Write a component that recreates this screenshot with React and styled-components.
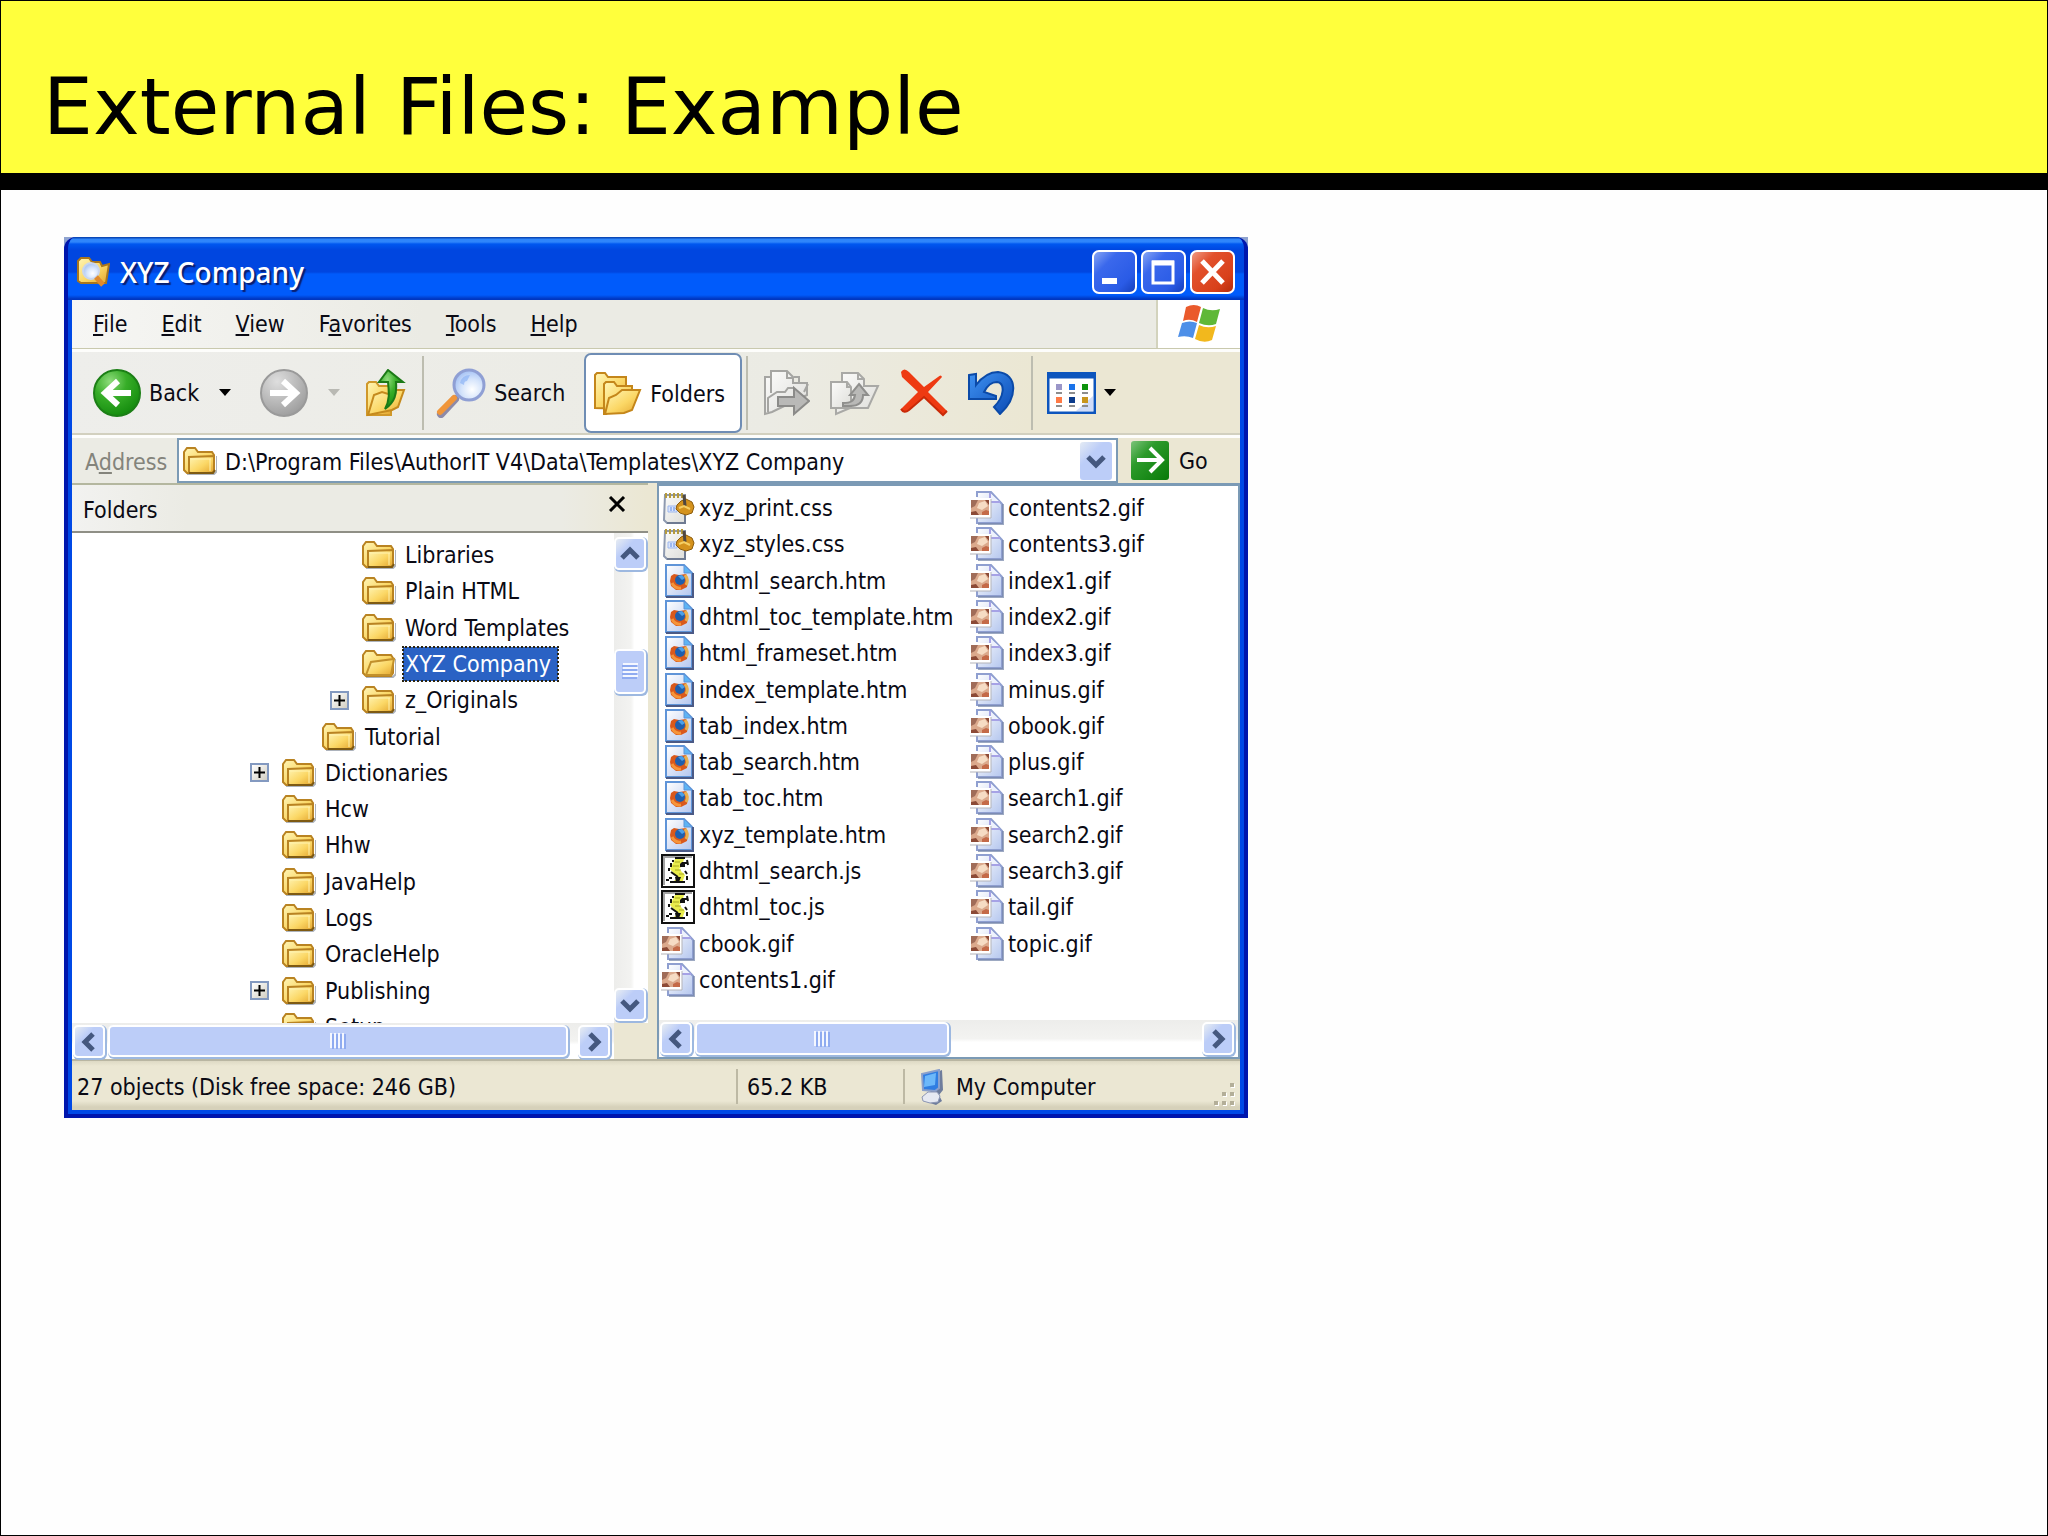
import React from 'react';

import styled, { createGlobalStyle } from 'styled-components';

const GlobalStyle = createGlobalStyle`
  :root {
    --ui: 'DejaVu Sans Condensed', 'DejaVu Sans', sans-serif;
    --face: #ebebe4;
    --sand: #ebe7d3;
    --line: #7b9ab5;
    --thumb: #bccdf8;
  }

  *, *::before, *::after {
    box-sizing: border-box;
  }

  body {
    margin: 0;
    background: #fefefe;
    color: #0a0a14;
    font-family: var(--ui);
    font-size: 23px;
    line-height: 28px;
  }

  button, select {
    color: inherit;
    font: inherit;
  }

  svg {
    display: block;
    flex: none;
  }
`;

/* slide */

const Slide = styled.main`
  min-height: 100vh;
  border: 1px solid #000;
`;

const Banner = styled.header`
  height: 189px;
  padding: 58px 42px 0;
  background: #ffff3c;
  border-bottom: 17px solid #000;
`;

const Title = styled.h1`
  margin: 0;
  color: #000;
  font-family: 'DejaVu Sans', sans-serif;
  font-size: 79px;
  font-weight: 400;
  line-height: 96px;
`;

const Stage = styled.section`
  padding: 47px 63px;
`;

/* window frame */

const Corners = styled.div`
  width: 100%;
  max-width: 1184px;
  background: linear-gradient(#8fa3d0 0 20px, transparent 20px);
`;

const Frame = styled.article`
  border: solid #0016ad;
  border-width: 0 4px 4px;
  border-radius: 12px 12px 0 0;
  padding: 0 4px 4px;
  background: #0049e6;
  overflow: hidden;
`;

const TitleBar = styled.header`
  display: flex;
  align-items: center;
  gap: 10px;
  height: 63px;
  margin: 0 -4px;
  padding: 6px 9px 0 8px;
  background: linear-gradient(
    #0a48b8 0 1px,
    #2f86fb 2px 5px,
    #0058f0 7px,
    #0046e0 13px 35px,
    #005bfb 37px 58px,
    #0036c0 62px
  );
`;

const WindowName = styled.h2`
  flex: 1;
  margin: 0;
  color: #fff;
  font-family: 'Noto Sans', sans-serif;
  font-size: 28px;
  font-weight: 500;
  line-height: 36px;
  text-shadow: 2px 2px 1px #0a1e6e;
`;

const Controls = styled.div`
  display: flex;
  gap: 4px;
`;

const ControlButton = styled.button`
  width: 45px;
  height: 44px;
  padding: 0;
  border: 2px solid #fff;
  border-radius: 7px;
  background: ${({ $close }) =>
    $close
      ? 'linear-gradient(135deg, #ef9a83, #e2512c 30%, #d8401a 75%, #b42c0c)'
      : 'linear-gradient(135deg, #86a5f5, #3a68ec 30%, #2a5be6 75%, #1640bc)'};
`;

/* bars */

const MenuBar = styled.nav`
  display: flex;
  align-items: center;
  height: 49px;
  padding-left: 21px;
  background: linear-gradient(90deg, #f6f6f4, var(--face) 30%);
  border-bottom: 1px solid #c9c9ae;
`;

const MenuItems = styled.div`
  display: flex;
  flex: 1;
  gap: 34px;
`;

const MenuButton = styled.button`
  padding: 0;
  border: 0;
  background: none;
`;

const Brand = styled.div`
  display: flex;
  align-items: center;
  justify-content: center;
  width: 84px;
  height: 48px;
  background: #fff;
  border-left: 2px solid #d3d3bd;
`;

const Toolbar = styled.div`
  display: flex;
  align-items: center;
  height: 86px;
  padding-left: 21px;
  background: linear-gradient(100deg, #eeeeeb, var(--face) 60%, var(--sand) 82%);
  border-top: 3px solid #fdfdfb;
  border-bottom: 2px solid #d2d0bf;
`;

const ToolButton = styled.button`
  display: flex;
  align-items: center;
  gap: 8px;
  height: 80px;
  padding: 0;
  border: 0;
  background: none;
  margin-right: ${({ $after = 20 }) => $after}px;

  &[aria-pressed='true'] {
    width: 158px;
    padding: 2px 8px 0;
    background: #fff;
    border: 2px solid #6f8db4;
    border-radius: 7px;
  }
`;

const Separator = styled.span`
  flex: none;
  width: 2px;
  height: 74px;
  margin-right: ${({ $after = 14 }) => $after}px;
  background: #bdbdb0;
`;

const AddressBar = styled.div`
  display: flex;
  align-items: stretch;
  height: 48px;
  padding-left: 13px;
  background: linear-gradient(90deg, var(--face) 60%, var(--sand) 90%);
  border-top: 3px solid #fdfdfb;
`;

const AddressLabel = styled.label`
  width: 92px;
  padding-top: 10px;
  color: #84847c;
`;

const AddressBox = styled.div`
  display: flex;
  flex: 1;
  align-items: center;
  gap: 8px;
  padding: 0 4px;
  background: #fff;
  border: 2px solid var(--line);
`;

const AddressSelect = styled.select`
  flex: 1;
  min-width: 0;
  padding: 2px 0 0;
  appearance: none;
  background: none;
  border: 0;
`;

const DropMark = styled.span`
  display: flex;
  align-items: center;
  justify-content: center;
  width: 32px;
  height: 38px;
  background: linear-gradient(135deg, #e4ebf4, var(--thumb) 35%);
  border-radius: 3px;
`;

const GoButton = styled.button`
  display: flex;
  align-items: center;
  gap: 10px;
  width: 122px;
  padding: 0 0 0 13px;
  border: 0;
  background: none;
`;

/* panes */

const Panes = styled.div`
  display: flex;
  height: 578px;
  background: var(--sand);
  border-bottom: 2px solid #b9b6a2;
`;

const FolderPane = styled.section`
  display: grid;
  grid-template: 50px 1fr 36px / 1fr 34px;
  width: 576px;
  margin-right: 9px;
`;

const PaneHeader = styled.header`
  display: flex;
  grid-column: 1 / -1;
  align-items: flex-start;
  justify-content: space-between;
  padding: 11px 22px 0 11px;
  background: linear-gradient(90deg, #f2f2f0, var(--face) 20% 85%, var(--sand));
  border-top: 2px solid #b4b79f;
  border-bottom: 2px solid #8f8f86;
`;

const CloseButton = styled.button`
  padding: 0;
  border: 0;
  background: none;
`;

const TreeClip = styled.div`
  min-height: 0;
  overflow: hidden;
  padding-top: 4px;
  background: #fff;
`;

const Tree = styled.ul`
  display: grid;
  grid-template-rows: repeat(14, 1fr);
  height: 508px;
  margin: 0;
  padding: 0;
  list-style: none;
`;

const TreeRow = styled.li`
  display: flex;
  align-items: center;
  padding-left: ${({ $level }) => 178 + $level * 40}px;
`;

const ExpanderSlot = styled.span`
  display: flex;
  width: 32px;
`;

const Expander = styled.button`
  display: flex;
  align-items: center;
  justify-content: center;
  width: 19px;
  height: 19px;
  padding: 0;
  background: linear-gradient(135deg, #fff, #d3cfc3);
  border: 2px solid #8399c0;
`;

const TreeLabel = styled.span`
  margin-left: 7px;
  padding: 3px ${({ $selected }) => ($selected ? 7 : 2)}px 3px 2px;
  color: ${({ $selected }) => ($selected ? '#fff' : 'inherit')};
  background: ${({ $selected }) => ($selected ? '#2a62c4' : 'none')};
  outline: ${({ $selected }) => ($selected ? '2px dotted #2b2410' : 'none')};
  outline-offset: -1px;
`;

const FilePane = styled.section`
  display: flex;
  flex: 1;
  flex-direction: column;
  min-width: 0;
  background: #fff;
  border: 2px solid var(--line);
  border-top-width: 3px;
`;

const FileList = styled.ul`
  display: grid;
  grid-auto-flow: column;
  grid-template-rows: repeat(14, 1fr);
  grid-template-columns: 309px 1fr;
  height: 508px;
  margin: 4px 0 0 2px;
  padding: 0;
  list-style: none;
`;

const FileRow = styled.li`
  display: flex;
  align-items: center;
  gap: 4px;
`;

/* scroll bars */

const ScrollBar = styled.div`
  display: flex;
  flex-direction: ${({ $vertical }) => ($vertical ? 'column' : 'row')};
  gap: 3px;
  padding: ${({ $vertical }) => ($vertical ? '4px 2px 2px 0' : '2px 4px 2px 1px')};
  margin-top: ${({ $bottom }) => ($bottom ? 'auto' : 0)};
  background: linear-gradient(${({ $vertical }) => ($vertical ? '90deg' : '180deg')}, #ededeb, #f3f3f1 50%, #fff 60%);
`;

const Cap = styled.button`
  display: flex;
  flex: none;
  align-items: center;
  justify-content: center;
  width: 32px;
  height: 33px;
  padding: 0;
  background: linear-gradient(135deg, #e8edf2, var(--thumb) 35%);
  border: 2px solid #fff;
  border-radius: 5px;
  box-shadow: 1px 1px 0 1px #9db8e0;
`;

const Thumb = styled.div`
  display: flex;
  flex: ${({ $size }) => `${$size} 0 0`};
  align-items: center;
  justify-content: center;
  background: var(--thumb);
  border: 2px solid #fff;
  border-radius: 5px;
  box-shadow: 1px 1px 0 1px #9db8e0;
`;

const Track = styled.span`
  flex: ${({ $size }) => `${$size} 0 0`};
`;

/* status bar */

const StatusBar = styled.footer`
  display: flex;
  align-items: center;
  height: 49px;
  padding: 2px 4px 0 0;
  background: linear-gradient(#ddd9c4, var(--sand) 5px 40px, #d6d1ba 46px);
`;

const StatusCell = styled.div`
  display: flex;
  align-items: center;
  gap: 11px;
  width: ${({ $width }) => ($width ? `${$width}px` : 'auto')};
  flex: ${({ $width }) => ($width ? 'none' : 1)};
  height: 35px;
  padding-left: ${({ $pad = 9 }) => $pad}px;
  border-left: ${({ $first }) => ($first ? '0' : '2px solid #bdb9a4')};
`;

const ResizeCorner = styled.div`
  align-self: flex-end;
  padding-bottom: 3px;
`;

/* drawings */

const HiddenSvg = styled.svg`
  position: absolute;
`;

const Defs = () => (
  <HiddenSvg width="0" height="0" aria-hidden="true">
    <defs>
      <linearGradient id="gold" x1="0" y1="0" x2="1" y2="1">
        <stop offset="0" stopColor="#fff6b8" />
        <stop offset=".55" stopColor="#fbd765" />
        <stop offset="1" stopColor="#e3a52e" />
      </linearGradient>
      <radialGradient id="green" cx=".35" cy=".25" r=".8">
        <stop offset="0" stopColor="#8fdc7c" />
        <stop offset=".45" stopColor="#37ad28" />
        <stop offset="1" stopColor="#128a0c" />
      </radialGradient>
      <radialGradient id="grey" cx=".35" cy=".25" r=".8">
        <stop offset="0" stopColor="#dedede" />
        <stop offset=".5" stopColor="#bdbdbd" />
        <stop offset="1" stopColor="#9c9c9c" />
      </radialGradient>
      <linearGradient id="go" x1="0" y1="0" x2="1" y2="1">
        <stop offset="0" stopColor="#7cc47a" />
        <stop offset=".35" stopColor="#2c9a2a" />
        <stop offset="1" stopColor="#087a08" />
      </linearGradient>
      <radialGradient id="glass" cx=".6" cy=".65" r=".7">
        <stop offset="0" stopColor="#fff" />
        <stop offset=".5" stopColor="#d5e4fb" />
        <stop offset="1" stopColor="#9dbcf3" />
      </radialGradient>
      <linearGradient id="page" x1="0" y1="0" x2="1" y2="1">
        <stop offset="0" stopColor="#fff" />
        <stop offset="1" stopColor="#b4c6ee" />
      </linearGradient>
      <linearGradient id="silver" x1="0" y1="0" x2="1" y2="1">
        <stop offset="0" stopColor="#fbfbfa" />
        <stop offset="1" stopColor="#dededa" />
      </linearGradient>
      <linearGradient id="blue" x1="0" y1="0" x2="1" y2="1">
        <stop offset="0" stopColor="#3f92f2" />
        <stop offset="1" stopColor="#0a4ab4" />
      </linearGradient>
    </defs>
  </HiddenSvg>
);

const FolderIcon = ({ open }) => (
  <svg width="34" height="28" viewBox="0 0 34 28" aria-hidden="true">
    <path d="M4 27h27l3-3V9" fill="none" stroke="#8a93a0" strokeWidth="2" opacity=".7" />
    <path d="M1 23V5l3-4h8l3 4h14l2 3v15l-2 3H4z" fill="url(#gold)" stroke="#b98322" strokeWidth="2" />
    {open ? (
      <path d="M4 25L9 12l23-3-3 16z" fill="url(#gold)" stroke="#c2902b" strokeWidth="2" />
    ) : (
      <>
        <path d="M6 25V10l25-1v15l-2 2H7z" fill="url(#gold)" stroke="#b98322" strokeWidth="2" />
        <path d="M8 12h20M27 12v12" stroke="#fff3b0" strokeWidth="1" />
        <path d="M6 26h24l2-3" fill="none" stroke="#7e5a12" strokeWidth="2" />
      </>
    )}
  </svg>
);

const SearchFolderIcon = () => (
  <svg width="34" height="30" viewBox="0 0 34 30" aria-hidden="true">
    <path d="M2 24V4l3-3h8l3 4h8l2 4 7-2-3 19H5z" fill="url(#gold)" stroke="#a9761c" strokeWidth="2" />
    <circle cx="15" cy="14" r="8" fill="url(#glass)" stroke="#c9d6ee" strokeWidth="2" />
    <path d="M20 20l7 8" stroke="#e08a2c" strokeWidth="5" />
  </svg>
);

const RoundArrow = ({ flip, fill, edge }) => (
  <svg width="48" height="48" viewBox="0 0 48 48" aria-hidden="true">
    <circle cx="24" cy="24" r="23" fill={`url(#${fill})`} stroke={edge} strokeWidth="2" />
    <path
      d="M38 24H13M25 12L12 24l13 12"
      fill="none"
      stroke="#fff"
      strokeWidth="6"
      transform={flip ? 'rotate(180 24 24)' : undefined}
    />
  </svg>
);

const Caret = ({ color = '#000' }) => (
  <svg width="12" height="7" viewBox="0 0 12 7" aria-hidden="true">
    <path d="M0 0h12L6 7z" fill={color} />
  </svg>
);

const UpFolderIcon = () => (
  <svg width="40" height="48" viewBox="0 0 40 48" aria-hidden="true">
    <path d="M1 46V15l2-2h7l3 4h12v29z" fill="url(#gold)" stroke="#d0982a" strokeWidth="2" />
    <path d="M2 46l6-20 8-3 6 2 5-4h11l-6 17-6 3z" fill="url(#gold)" stroke="#c58a1d" strokeWidth="2" />
    <path
      d="M22 1l15 12h-7c1 12-1 20-11 27 5-9 4-17 3-27h-9z"
      fill="url(#green)"
      stroke="#1c7a17"
      strokeWidth="2"
    />
  </svg>
);

const SearchIcon = () => (
  <svg width="50" height="50" viewBox="0 0 50 50" aria-hidden="true">
    <path d="M5 46l14-15" stroke="#8d8aa8" strokeWidth="8" strokeLinecap="round" />
    <path d="M4 44l14-14" stroke="#f0963a" strokeWidth="6" strokeLinecap="round" />
    <circle cx="33" cy="17" r="15" fill="url(#glass)" stroke="#8f9fd4" strokeWidth="3" />
    <path d="M24 15q2-8 10-8l-3 6q-3 0-3 4z" fill="#8fb5f5" opacity=".7" />
  </svg>
);

const FoldersIcon = () => (
  <svg width="48" height="44" viewBox="0 0 48 44" aria-hidden="true">
    <path d="M1 36V3l2-2h8l3 4h18v32z" fill="url(#gold)" stroke="#c4861a" strokeWidth="2" />
    <path d="M10 42V12l2-2h8l3 4h15v6L12 42z" fill="url(#gold)" stroke="#c4861a" strokeWidth="2" />
    <path d="M11 42l4-16 7-3 6-5h18l-8 20-8 3z" fill="url(#gold)" stroke="#c4861a" strokeWidth="2" />
  </svg>
);

const MoveToIcon = () => (
  <svg width="46" height="46" viewBox="0 0 46 46" aria-hidden="true">
    <g fill="url(#silver)" stroke="#a5a5a2" strokeWidth="2">
      <path d="M1 44V7h6V1h16l6 6v6h14v12L8 42z" />
      <path d="M7 7v16M23 2v6h6M30 7h5v6M44 14l-4 8" fill="none" />
      <path d="M4 42V28l9-6h8l3-4h6" fill="none" />
      <path d="M14 27h16v-9l15 13-15 13v-8H14z" fill="#b9b9b7" stroke="#8b8b89" />
    </g>
  </svg>
);

const CopyToIcon = () => (
  <svg width="50" height="46" viewBox="0 0 50 46" aria-hidden="true">
    <g fill="url(#silver)" stroke="#a9a9a6" strokeWidth="2">
      <path d="M12 12V3h16l6 6v7h14L38 38H20L6 44v-6" />
      <path d="M1 38V12h16l4 5v21z" />
      <path d="M28 3v6h6M17 12v5h4" fill="none" />
      <path d="M29 14l9 11h-5c0 8-5 11-13 11h-7v-3c8 0 11-2 12-8h-5z" fill="#b9b9b7" stroke="#8f8f8d" />
    </g>
  </svg>
);

const DeleteIcon = () => (
  <svg width="48" height="48" viewBox="0 0 48 48" aria-hidden="true">
    <path d="M1 3q3-5 8 0l15 15L38 8q3-3 4 0L28 23l19 19-4 4-19-18L9 41q-5 4-8-1l17-17L2 8z" fill="#ee3a12" />
    <path d="M47 42l-4 4-19-18L9 41q-5 4-8-1" fill="none" stroke="#c92a08" strokeWidth="2" />
  </svg>
);

const UndoIcon = () => (
  <svg width="47" height="44" viewBox="0 0 47 44" aria-hidden="true">
    <path
      d="M1 4l7-1v11Q18 1 30 1c20 2 20 26 2 42l-6-7c11-11 11-24 3-25q-8 0-13 10l12 4v3H1z"
      fill="url(#blue)"
      stroke="#0b4aa8"
      strokeWidth="2"
    />
  </svg>
);

const ViewsIcon = () => (
  <svg width="49" height="42" viewBox="0 0 49 42" aria-hidden="true">
    <rect x="1" y="1" width="47" height="40" fill="#fff" stroke="#0d55bd" strokeWidth="3" />
    <path d="M1 4h47" stroke="#0d55bd" strokeWidth="5" />
    <path d="M29 39h17V24z" fill="#cfdcfa" />
    {[
      ['#9a96c8', '#ff7a45'],
      ['#1a73ea', '#0b3c8c'],
      ['#0d930d', '#c8961e'],
    ].map(([top, bottom], i) => (
      <g key={top} transform={`translate(${9 + i * 13} 0)`}>
        <path d="M0 12h6v6H0z" fill={top} />
        <path d="M0 25h6v6H0z" fill={bottom} />
        <path d="M0 21h6M0 34h6" stroke="#8d8d8d" strokeWidth="2" />
      </g>
    ))}
  </svg>
);

const FlagIcon = () => (
  <svg width="44" height="40" viewBox="0 0 44 40" aria-hidden="true">
    <path d="M9 3q8-4 15 0l-4 15q-7-4-14-1z" fill="#ea5a2c" />
    <path d="M26 4q8 4 17 1l-4 15q-8 3-17-1z" fill="#5fb837" />
    <path d="M5 19q8-3 15 0l-4 15q-7-3-15-1z" fill="#4d8fe8" />
    <path d="M22 21q8 4 17 1l-4 14q-8 4-17-1z" fill="#f2b81d" />
  </svg>
);

const GoIcon = () => (
  <svg width="38" height="39" viewBox="0 0 38 39" aria-hidden="true">
    <rect width="38" height="39" rx="3" fill="url(#go)" />
    <path d="M6 19h23M19 7l12 12-12 12" fill="none" stroke="#fff" strokeWidth="4" />
  </svg>
);

const rotations = { up: 0, right: 90, down: 180, left: 270 };

const Chevron = ({ to }) => (
  <svg width="20" height="20" viewBox="0 0 20 20" aria-hidden="true">
    <path
      d="M2 14l8-8 8 8"
      fill="none"
      stroke="#45587f"
      strokeWidth="5"
      transform={`rotate(${rotations[to]} 10 10)`}
    />
  </svg>
);

const Ridges = ({ vertical }) => (
  <svg width="16" height="16" viewBox="0 0 16 16" aria-hidden="true">
    <g transform={vertical ? 'rotate(90 8 8)' : undefined} strokeWidth="2">
      <path d="M1 0v15M5 0v15M9 0v15M13 0v15" stroke="#f4f7ff" />
      <path d="M3 1v15M7 1v15M11 1v15M15 1v15" stroke="#8fabf0" />
    </g>
  </svg>
);

const SmallCross = () => (
  <svg width="18" height="16" viewBox="0 0 18 16" aria-hidden="true">
    <path d="M2 1l14 14M16 1L2 15" stroke="#000" strokeWidth="3" />
  </svg>
);

const Plus = () => (
  <svg width="11" height="11" viewBox="0 0 11 11" aria-hidden="true">
    <path d="M0 5.500h11M5.500 0v11" stroke="#000" strokeWidth="2" />
  </svg>
);

const MinimizeGlyph = () => (
  <svg width="41" height="40" viewBox="0 0 41 40" aria-hidden="true">
    <path d="M8 26h15v6H8z" fill="#fff" />
  </svg>
);

const MaximizeGlyph = () => (
  <svg width="41" height="40" viewBox="0 0 41 40" aria-hidden="true">
    <path d="M10 10h20v21H10z" fill="none" stroke="#fff" strokeWidth="3" />
    <path d="M9 11h22" stroke="#fff" strokeWidth="5" />
  </svg>
);

const CloseGlyph = () => (
  <svg width="41" height="40" viewBox="0 0 41 40" aria-hidden="true">
    <path d="M10 9l21 22M31 9L10 31" stroke="#fff" strokeWidth="5" />
  </svg>
);

const ComputerIcon = () => (
  <svg width="24" height="36" viewBox="0 0 24 36" aria-hidden="true">
    <path d="M16 3l5-2 1 20-4 5 3 6-6 4-9-3z" fill="#6f7d9c" />
    <path d="M1 5l17-4v18l-4 3-12-1z" fill="#2f7de2" stroke="#8aa0cc" strokeWidth="2" />
    <path d="M4 7l11-3-1 12-11 2z" fill="#6cb8fa" />
    <path d="M1 28l6-5h9l3 4-2 6-8 1-7-2z" fill="#e6e9f2" stroke="#8c96b4" />
  </svg>
);

const Grip = () => (
  <svg width="24" height="26" viewBox="0 0 24 26" aria-hidden="true">
    {[[18, 2], [10, 11], [18, 11], [2, 20], [10, 20], [18, 20]].map(([x, y]) => (
      <g key={`${x}-${y}`}>
        <path d={`M${x + 1} ${y + 1}h4v4h-4z`} fill="#fff" />
        <path d={`M${x} ${y}h4v4h-4z`} fill="#b3ae98" />
      </g>
    ))}
  </svg>
);

const CssIcon = () => (
  <svg width="34" height="34" viewBox="0 0 34 34" aria-hidden="true">
    <path d="M4 4h20v28H6l-3-3z" fill="url(#silver)" stroke="#8e9ab0" strokeWidth="2" />
    <path d="M24 14v18H6" fill="none" stroke="#6f7b92" strokeWidth="2" />
    <path d="M5 2v5M9 2v5M13 2v5M17 2v5M21 2v5" stroke="#b59a3c" strokeWidth="2" />
    <path d="M7 15h9v6H7z" fill="#dbe5fb" stroke="#9db7ee" />
    <path d="M10 16v4M13 16v4" stroke="#5f8ae6" />
    <path d="M16 14l4-4 5-2 6 3 2 5-2 6-6 2-6-2-4-4z" fill="#d4921c" stroke="#8c5c0c" />
    <path d="M23 4l1 11" stroke="#4f4740" strokeWidth="3" />
    <path d="M18 17l5-2 6 3" fill="none" stroke="#f6cf64" strokeWidth="2" />
  </svg>
);

const HtmIcon = () => (
  <svg width="34" height="34" viewBox="0 0 34 34" aria-hidden="true">
    <path d="M5 1h18l8 8v23H5z" fill="url(#page)" stroke="#5f94d8" strokeWidth="2" />
    <path d="M32 9v24H5" fill="none" stroke="#4b5a86" strokeWidth="2" />
    <path d="M23 1v8h8z" fill="#5db4f5" stroke="#5f94d8" />
    <path d="M10 12l3-2 5 1 7-1 2 5-1 8-6 3h-5l-5-4-1-5z" fill="#d9591c" />
    <circle cx="19" cy="16" r="5" fill="#1f5fae" />
    <path d="M17 12l4-1 3 3-3 2z" fill="#4aa0ea" />
    <path d="M24 11q4 5 1 10" fill="none" stroke="#e9b04e" strokeWidth="3" />
    <path d="M11 19q3 6 9 5" fill="none" stroke="#f5953a" strokeWidth="3" />
  </svg>
);

const JsIcon = () => (
  <svg width="34" height="34" viewBox="0 0 34 34" aria-hidden="true">
    <rect x="1" y="1" width="32" height="32" fill="#fff" stroke="#111" strokeWidth="2" />
    <path d="M3 31V3h28" fill="none" stroke="#a3a3a3" strokeWidth="2" />
    <path d="M13 6l2-2h10l3 3-2 4h-7l8 8-1 8-4 3H8l-3-3 3-3h8l-9-9 2-7z" fill="#fff" />
    <path d="M14 5h9l-2 7-3 3 6 6-3 8H10l7-5-8-9z" fill="#e9ec4c" />
    <path
      d="M14 4h10M12 6v2M10 9v4M8 14v3M10 18l7 5M26 6l1 5M24 17l2 3M26 22v4M24 28H9M5 26h3M8 24h3"
      fill="none"
      stroke="#111"
      strokeWidth="2"
    />
    <path d="M21 8h5v2h-2v3h-5v-3zM14 23h6l-2 5h-3z" fill="#111" />
    <path d="M14 8h5M12 12h6M14 16h6M18 20h5" stroke="#a8a820" strokeWidth="1" />
  </svg>
);

const GifIcon = () => (
  <svg width="34" height="34" viewBox="0 0 34 34" aria-hidden="true">
    <path d="M7 1h14l11 12v19H7z" fill="url(#page)" />
    <path d="M7 6V1h14l11 12v19H7v-5" fill="none" stroke="#8f9fd0" strokeWidth="2" />
    <path d="M20 2v9h10" fill="#eef2fd" stroke="#a6a2e6" strokeWidth="2" />
    <path d="M33 13v20H8" fill="none" stroke="#7485a8" strokeWidth="2" opacity=".7" />
    <rect x="0" y="7" width="21" height="20" fill="#fff" />
    <path d="M0 27h21V8" fill="none" stroke="#b3b3b8" strokeWidth="1" />
    <rect x="1" y="9" width="18" height="15" fill="#dba98c" />
    <path d="M1 9h7l-3 6-4 2z" fill="#a06c58" />
    <path d="M1 24v-3l5-1 3 4zM15 9h4v5z" fill="#8c4a36" />
    <path d="M9 12l6-2 3 5-6 4-5-2z" fill="#f6dcc4" />
    <path d="M12 21l4-2 3 1v4h-7z" fill="#c46a48" />
  </svg>
);

const fileIcons = { css: CssIcon, htm: HtmIcon, js: JsIcon, gif: GifIcon };

/* content */

const menus = [
  ['', 'F', 'ile'],
  ['', 'E', 'dit'],
  ['', 'V', 'iew'],
  ['F', 'a', 'vorites'],
  ['', 'T', 'ools'],
  ['', 'H', 'elp'],
];

const folders = [
  { name: 'Libraries', level: 2 },
  { name: 'Plain HTML', level: 2 },
  { name: 'Word Templates', level: 2 },
  { name: 'XYZ Company', level: 2, selected: true },
  { name: 'z_Originals', level: 2, expandable: true },
  { name: 'Tutorial', level: 1 },
  { name: 'Dictionaries', level: 0, expandable: true },
  { name: 'Hcw', level: 0 },
  { name: 'Hhw', level: 0 },
  { name: 'JavaHelp', level: 0 },
  { name: 'Logs', level: 0 },
  { name: 'OracleHelp', level: 0 },
  { name: 'Publishing', level: 0, expandable: true },
  { name: 'Setup', level: 0 },
];

const files = [
  'xyz_print.css',
  'xyz_styles.css',
  'dhtml_search.htm',
  'dhtml_toc_template.htm',
  'html_frameset.htm',
  'index_template.htm',
  'tab_index.htm',
  'tab_search.htm',
  'tab_toc.htm',
  'xyz_template.htm',
  'dhtml_search.js',
  'dhtml_toc.js',
  'cbook.gif',
  'contents1.gif',
  'contents2.gif',
  'contents3.gif',
  'index1.gif',
  'index2.gif',
  'index3.gif',
  'minus.gif',
  'obook.gif',
  'plus.gif',
  'search1.gif',
  'search2.gif',
  'search3.gif',
  'tail.gif',
  'topic.gif',
];

const FileItem = ({ name }) => {
  const Icon = fileIcons[name.split('.').pop()];
  return (
    <FileRow>
      <Icon />
      {name}
    </FileRow>
  );
};

const ExplorerToolbar = () => (
  <Toolbar>
    <ToolButton>
      <RoundArrow fill="green" edge="#1c7f16" />
      Back
    </ToolButton>
    <ToolButton $after={29} aria-label="Back history">
      <Caret />
    </ToolButton>
    <ToolButton aria-label="Forward">
      <RoundArrow flip fill="grey" edge="#9a9a9a" />
    </ToolButton>
    <ToolButton $after={26} aria-label="Forward history">
      <Caret color="#b9b9b3" />
    </ToolButton>
    <ToolButton $after={16} aria-label="Up">
      <UpFolderIcon />
    </ToolButton>
    <Separator $after={12} />
    <ToolButton $after={19}>
      <SearchIcon />
      Search
    </ToolButton>
    <ToolButton $after={4} aria-pressed="true">
      <FoldersIcon />
      Folders
    </ToolButton>
    <Separator $after={16} />
    <ToolButton aria-label="Move To">
      <MoveToIcon />
    </ToolButton>
    <ToolButton aria-label="Copy To">
      <CopyToIcon />
    </ToolButton>
    <ToolButton aria-label="Delete">
      <DeleteIcon />
    </ToolButton>
    <ToolButton $after={16} aria-label="Undo">
      <UndoIcon />
    </ToolButton>
    <Separator />
    <ToolButton $after={0} aria-label="Views">
      <ViewsIcon />
      <Caret />
    </ToolButton>
  </Toolbar>
);

const App = () => (
  <Slide>
    <GlobalStyle />
    <Defs />
    <Banner>
      <Title>External Files: Example</Title>
    </Banner>
    <Stage>
      <Corners>
        <Frame>
          <TitleBar>
            <SearchFolderIcon />
            <WindowName>XYZ Company</WindowName>
            <Controls>
              <ControlButton aria-label="Minimize">
                <MinimizeGlyph />
              </ControlButton>
              <ControlButton aria-label="Maximize">
                <MaximizeGlyph />
              </ControlButton>
              <ControlButton $close aria-label="Close">
                <CloseGlyph />
              </ControlButton>
            </Controls>
          </TitleBar>

          <MenuBar>
            <MenuItems>
              {menus.map(([before, key, after]) => (
                <MenuButton key={key + after}>
                  {before}
                  <u>{key}</u>
                  {after}
                </MenuButton>
              ))}
            </MenuItems>
            <Brand>
              <FlagIcon />
            </Brand>
          </MenuBar>

          <ExplorerToolbar />

          <AddressBar>
            <AddressLabel htmlFor="address">
              A<u>d</u>dress
            </AddressLabel>
            <AddressBox>
              <FolderIcon />
              <AddressSelect id="address">
                <option>D:\Program Files\AuthorIT V4\Data\Templates\XYZ Company</option>
              </AddressSelect>
              <DropMark>
                <Chevron to="down" />
              </DropMark>
            </AddressBox>
            <GoButton>
              <GoIcon />
              Go
            </GoButton>
          </AddressBar>

          <Panes>
            <FolderPane>
              <PaneHeader>
                Folders
                <CloseButton aria-label="Close folders">
                  <SmallCross />
                </CloseButton>
              </PaneHeader>
              <TreeClip>
                <Tree>
                  {folders.map(({ name, level, selected, expandable }) => (
                    <TreeRow key={name} $level={level}>
                      <ExpanderSlot>
                        {expandable && (
                          <Expander aria-label={`Expand ${name}`}>
                            <Plus />
                          </Expander>
                        )}
                      </ExpanderSlot>
                      <FolderIcon open={selected} />
                      <TreeLabel $selected={selected}>{name}</TreeLabel>
                    </TreeRow>
                  ))}
                </Tree>
              </TreeClip>
              <ScrollBar $vertical>
                <Cap aria-label="Scroll up">
                  <Chevron to="up" />
                </Cap>
                <Track $size={74} />
                <Thumb $size={42}>
                  <Ridges vertical />
                </Thumb>
                <Track $size={294} />
                <Cap aria-label="Scroll down">
                  <Chevron to="down" />
                </Cap>
              </ScrollBar>
              <ScrollBar>
                <Cap aria-label="Scroll left">
                  <Chevron to="left" />
                </Cap>
                <Thumb $size={460}>
                  <Ridges />
                </Thumb>
                <Track $size={4} />
                <Cap aria-label="Scroll right">
                  <Chevron to="right" />
                </Cap>
              </ScrollBar>
            </FolderPane>

            <FilePane>
              <FileList>
                {files.map((name) => (
                  <FileItem key={name} name={name} />
                ))}
              </FileList>
              <ScrollBar $bottom>
                <Cap aria-label="Scroll left">
                  <Chevron to="left" />
                </Cap>
                <Thumb $size={249}>
                  <Ridges />
                </Thumb>
                <Track $size={247} />
                <Cap aria-label="Scroll right">
                  <Chevron to="right" />
                </Cap>
              </ScrollBar>
            </FilePane>
          </Panes>

          <StatusBar>
            <StatusCell $first $pad={5} $width={664}>
              27 objects (Disk free space: 246 GB)
            </StatusCell>
            <StatusCell $width={167}>65.2 KB</StatusCell>
            <StatusCell $pad={16}>
              <ComputerIcon />
              My Computer
            </StatusCell>
            <ResizeCorner>
              <Grip />
            </ResizeCorner>
          </StatusBar>
        </Frame>
      </Corners>
    </Stage>
  </Slide>
);

export default App;
